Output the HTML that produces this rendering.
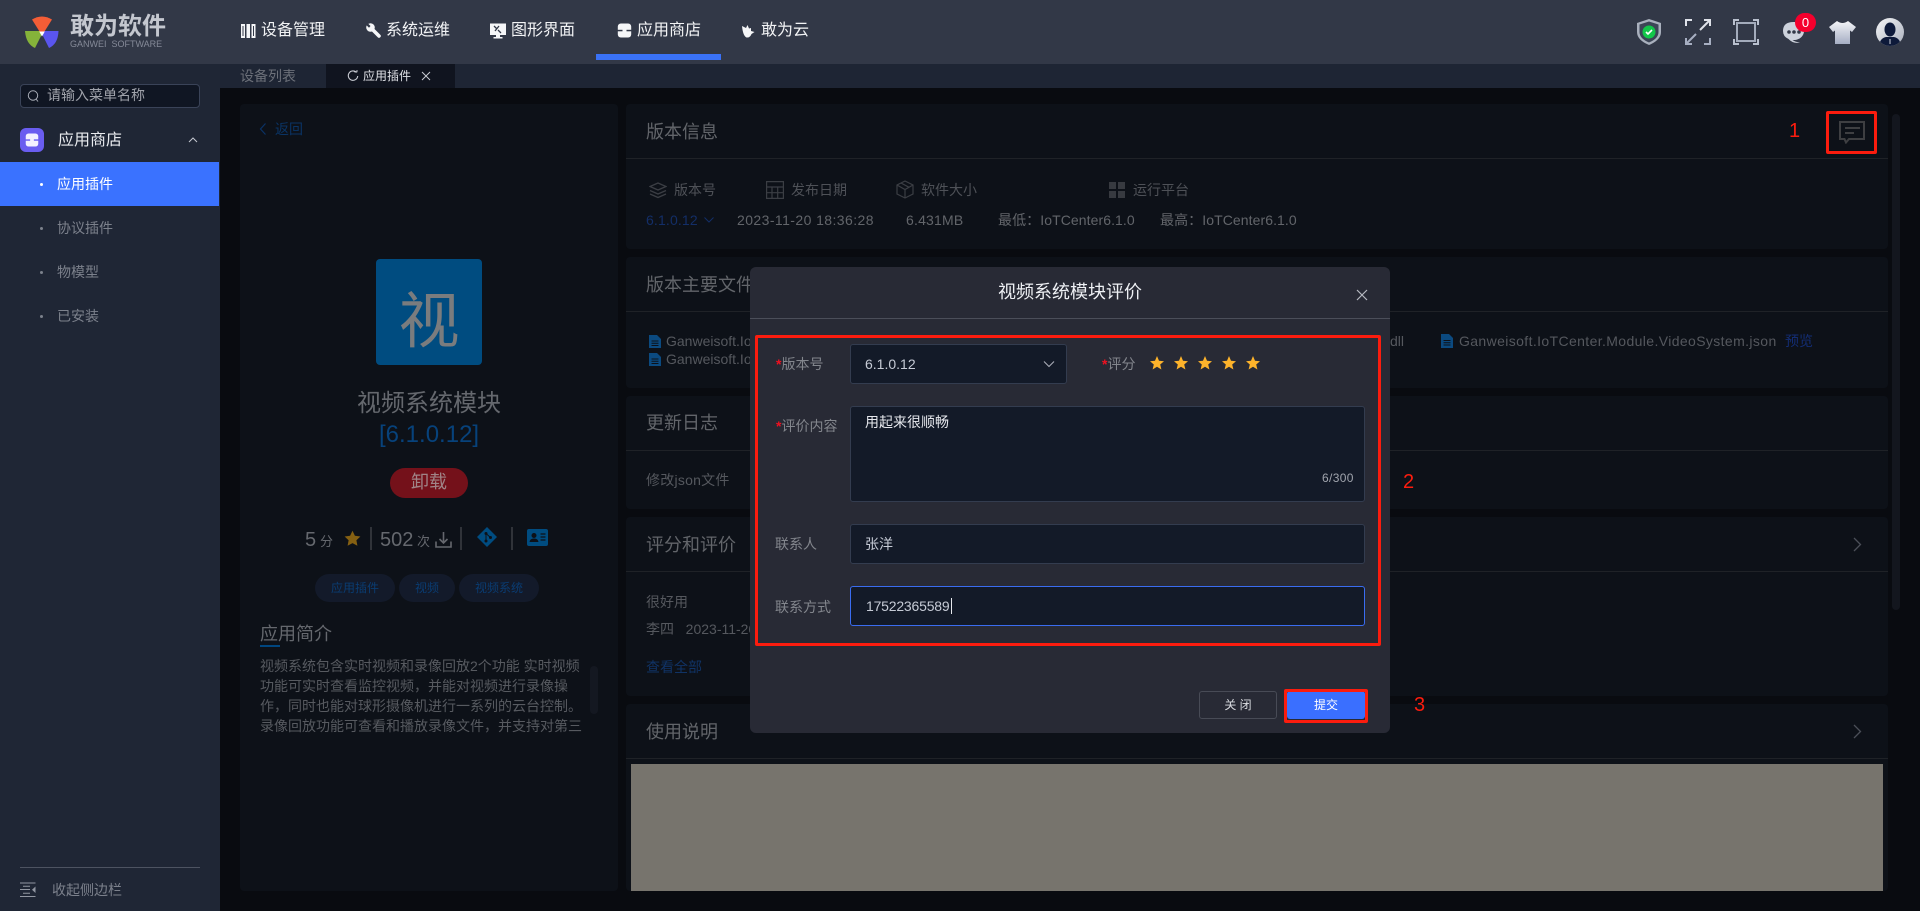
<!DOCTYPE html>
<html lang="zh-CN"><head><meta charset="utf-8"><title>敢为软件</title>
<style>
*{box-sizing:border-box;margin:0;padding:0}
html,body{width:1920px;height:911px;overflow:hidden;background:#090b10}
body{position:relative;font-family:"Liberation Sans","Noto Sans CJK SC",sans-serif;font-size:14px}
.a{position:absolute}
.t{position:absolute;white-space:nowrap;line-height:20px;height:20px}
.card{position:absolute;left:626px;width:1262px;background:#0d1118;border-radius:4px}
.line{position:absolute;left:626px;width:1262px;height:1px;background:#1f2227}
.ct{font-size:18px;color:#62656a;line-height:24px;height:24px;left:646px}
.lab{color:#4e5157}.val{color:#62656a;letter-spacing:.1px}
.f{color:#55585e}
.side{color:#7c818c}
.inp{position:absolute;background:#131a28;border:1px solid #333c4f;border-radius:3px}
.ml{color:#83868d}
.red{color:#f01020;font-weight:700}
.box{position:absolute;border:3px solid #fb1c0e;border-radius:2px}
.num{position:absolute;color:#fb1c0e;font-size:20px;line-height:24px;white-space:nowrap}
svg{position:absolute;display:block}
</style></head><body>

<!-- header -->
<div class="a" style="left:0;top:0;width:1920px;height:64px;background:#323847"></div>
<svg style="left:24px;top:14px" width="36" height="36" viewBox="24 14 36 36">
<path d="M32 19.500Q42 13.500 52 19.500L44.500 31.500H39.500Z" fill="#f45d36"/>
<path d="M25 31H39.500L41.500 35L35 48Q26 44 25 31Z" fill="#85b33a"/>
<path d="M58.500 31H44.500L42.500 35L49 48Q58 44 58.500 31Z" fill="#5a55ee"/>
<path d="M39.200 31.500H44.800L42 36.500Z" fill="#fff"/>
</svg>
<div class="t" style="left:70px;top:14px;height:26px;line-height:26px;font-size:24px;font-weight:700;color:#c4c7cf">敢为软件</div>
<div class="t" style="left:70px;top:38px;height:12px;line-height:12px;font-size:9px;color:#858a98">GANWEI&nbsp; SOFTWARE</div>

<svg style="left:241px;top:24px" width="15" height="15" viewBox="0 0 15 15"><path d="M0 0H4V14H0ZM5.500 0H9V14H5.500ZM10.500 0H14.500V14H10.500Z" fill="#f5f6f8"/><path d="M1.500 2H2.500V12H1.500ZM12 2H13V12H12Z" fill="#323847"/></svg>
<div class="t" style="left:261px;top:21px;font-size:16px;color:#f2f3f5">设备管理</div>
<svg style="left:366px;top:23px" width="15" height="15" viewBox="0 0 15 15"><circle cx="4.500" cy="4.500" r="4.300" fill="#f5f6f8"/><path d="M5 5 13 13" stroke="#f5f6f8" stroke-width="3.600" stroke-linecap="round"/><path d="M1.500 0 4.500 3 3 4.800 0 1.800Z" fill="#323847"/></svg>
<div class="t" style="left:386px;top:21px;font-size:16px;color:#f2f3f5">系统运维</div>
<svg style="left:490px;top:23px" width="16" height="16" viewBox="0 0 16 16"><path d="M0 .5H16V12H10V14H12.500V15.500H3.500V14H6V12H0Z" fill="#f5f6f8"/><path d="M4 3 7 6M9 3 5 8M8 7 11 10" stroke="#323847" stroke-width="1.300"/></svg>
<div class="t" style="left:511px;top:21px;font-size:16px;color:#f2f3f5">图形界面</div>
<svg style="left:617px;top:23px" width="15" height="15" viewBox="0 0 15 15"><rect x=".8" y=".5" width="13.400" height="14" rx="3" fill="#f5f6f8"/><path d="M.5 6.800H14.500V8.300H.5Z" fill="#323847"/><path d="M5.500 6H9.500V9H5.500Z" fill="#f5f6f8"/></svg>
<div class="t" style="left:637px;top:21px;font-size:16px;color:#f2f3f5">应用商店</div>
<div class="a" style="left:596px;top:54px;width:125px;height:6px;background:#3a72f7"></div>
<svg style="left:742px;top:25px" width="13" height="13" viewBox="0 0 13 13"><path d="M0 1 4 3 5.500 0 7 3.500 9 3V6L12.500 7 9.500 9Q8 13 4.500 12.500 1 11 0 1Z" fill="#f5f6f8"/></svg>
<div class="t" style="left:761px;top:21px;font-size:16px;color:#f2f3f5">敢为云</div>

<!-- header right icons -->
<svg style="left:1637px;top:19px" width="24" height="26" viewBox="0 0 24 26"><path d="M12 0 24 4V13Q24 21 12 26 0 21 0 13V4Z" fill="#a9b0bd"/><path d="M12 2.500 21.500 5.500V13Q21.500 19.500 12 23.500 2.500 19.500 2.500 13V5.500Z" fill="#3c4556"/><circle cx="12" cy="13" r="6.500" fill="#13c74a"/><path d="M9 13 11 15 15 11" stroke="#fff" stroke-width="1.600" fill="none"/></svg>
<svg style="left:1685px;top:19px" width="26" height="26" viewBox="0 0 26 26" fill="none" stroke="#dfe2ea" stroke-width="2"><path d="M7 1H1V7"/><path d="M15 11 25 1M19 1H25V7" /><path d="M1 19V25H7M1 25 11 15" stroke="#a7afc2"/><path d="M25 19V25H19" stroke="#a7afc2"/></svg>
<svg style="left:1733px;top:19px" width="26" height="26" viewBox="0 0 26 26" fill="none" stroke="#a9b1c2" stroke-width="2"><rect x="4" y="4" width="18" height="18" stroke="#a3abbb"/><path d="M1 6V1H6M20 1H25V6M1 20V25H6M20 25H25V20" stroke="#b9c0ce"/></svg>
<svg style="left:1783px;top:21px" width="24" height="23" viewBox="0 0 24 23"><path d="M10.500 1C16.500 1 21 5 21 10S16.500 19 11 19L9.500 19Q12 21 17 21.500 10 23 5.500 18 0 15.500 0 10 0 1 10.500 1Z" fill="#cdd2dc"/><circle cx="6" cy="11" r="1.800" fill="#323847"/><circle cx="11" cy="11" r="1.800" fill="#323847"/><circle cx="16" cy="11" r="1.800" fill="#323847"/></svg>
<div class="a" style="left:1795px;top:13px;width:21px;height:19px;background:#f5002d;border-radius:10px;color:#fff;font-size:13px;line-height:19px;text-align:center">0</div>
<svg style="left:1829px;top:20px" width="27" height="24" viewBox="0 0 27 24"><defs><linearGradient id="sh" x1="0" y1="0" x2="0" y2="1"><stop offset="0" stop-color="#f4f5f8"/><stop offset="1" stop-color="#a5adc3"/></linearGradient></defs><path d="M8 1Q13.500 5 19 1L27 7 23 12 21 10.500V24H6V10.500L4 12 0 7Z" fill="url(#sh)"/></svg>
<svg style="left:1876px;top:18px" width="28" height="28" viewBox="0 0 28 28"><defs><linearGradient id="av" x1="0" y1="0" x2="1" y2="1"><stop offset="0" stop-color="#f4f5f7"/><stop offset="1" stop-color="#aab0bd"/></linearGradient><clipPath id="ac"><circle cx="14" cy="14" r="14"/></clipPath></defs><circle cx="14" cy="14" r="14" fill="url(#av)"/><g clip-path="url(#ac)"><ellipse cx="14" cy="11.500" rx="5.500" ry="7" fill="#0e1a3a"/><path d="M3 28Q4 20 10 19H18Q24 20 25 28Z" fill="#0e1a3a"/><path d="M13.500 21H14.500V26H13.500Z" fill="#cfd3dc"/></g></svg>

<!-- sidebar -->
<div class="a" style="left:0;top:64px;width:220px;height:847px;background:#1f2635"></div>
<div class="a" style="left:20px;top:84px;width:180px;height:24px;background:#101623;border:1px solid #3a4358;border-radius:4px"></div>
<svg style="left:27px;top:89px" width="13" height="14" viewBox="0 0 13 14" fill="none" stroke="#a9adb7" stroke-width="1"><circle cx="6" cy="6.500" r="4.700"/><path d="M9 10 11 12.500"/></svg>
<div class="t" style="left:47px;top:85px;font-size:14px;color:#a0a3ab;line-height:21px;height:21px">请输入菜单名称</div>
<div class="a" style="left:20px;top:128px;width:24px;height:24px;border-radius:6px;background:#6a5df0"></div>
<svg style="left:25px;top:133px" width="14" height="14" viewBox="0 0 15 15"><rect x=".8" y=".5" width="13.400" height="14" rx="3" fill="#f3f1ff"/><path d="M.5 6.800H14.500V8.300H.5Z" fill="#6a5df0"/><path d="M5.500 6H9.500V9H5.500Z" fill="#f3f1ff"/></svg>
<div class="t" style="left:58px;top:131px;font-size:16px;color:#e8eaee">应用商店</div>
<svg style="left:187px;top:136px" width="12" height="8" viewBox="0 0 12 8" fill="none" stroke="#c5c8d0" stroke-width="1"><path d="M2 6 6 2 10 6"/></svg>
<div class="a" style="left:0;top:162px;width:219px;height:44px;background:#3a72ff"></div>
<div class="a" style="left:40px;top:183px;width:3px;height:3px;border-radius:50%;background:#fff"></div>
<div class="t" style="left:57px;top:174px;color:#fff">应用插件</div>
<div class="a" style="left:40px;top:227px;width:3px;height:3px;border-radius:50%;background:#7c818c"></div>
<div class="t side" style="left:57px;top:218px">协议插件</div>
<div class="a" style="left:40px;top:271px;width:3px;height:3px;border-radius:50%;background:#7c818c"></div>
<div class="t side" style="left:57px;top:262px">物模型</div>
<div class="a" style="left:40px;top:315px;width:3px;height:3px;border-radius:50%;background:#7c818c"></div>
<div class="t side" style="left:57px;top:306px">已安装</div>
<div class="a" style="left:20px;top:867px;width:180px;height:1px;background:#4d5361"></div>
<svg style="left:20px;top:882px" width="16" height="16" viewBox="0 0 16 16"><path d="M0 .5H15.500V1.500H0ZM0 7H10V8H0ZM0 14H15.500V15H0ZM3 3.700H10V4.700H3ZM3 10.700H10V11.700H3Z" fill="#9297a2"/><path d="M15.500 4.500V11L12 7.750Z" fill="#9297a2"/></svg>
<div class="t side" style="left:52px;top:880px">收起侧边栏</div>

<!-- tabs -->
<div class="a" style="left:220px;top:64px;width:1700px;height:24px;background:#1e2534"></div>
<div class="t" style="left:240px;top:66px;color:#6c7079">设备列表</div>
<div class="a" style="left:326px;top:64px;width:129px;height:24px;background:#10141f"></div>
<svg style="left:347px;top:70px" width="12" height="12" viewBox="0 0 12 12" fill="none" stroke="#c9ccd3" stroke-width="1.100"><path d="M9.500 2.500A4.700 4.700 0 1 0 10.700 6"/><path d="M7 1.800H10V-.5" stroke-width=".9"/></svg>
<div class="t" style="left:363px;top:66px;font-size:12px;color:#dfe1e6">应用插件</div>
<svg style="left:421px;top:71px" width="10" height="10" viewBox="0 0 10 10" stroke="#c9ccd3" stroke-width="1"><path d="M1 1 9 9M9 1 1 9"/></svg>

<!-- left panel -->
<div class="a" style="left:240px;top:104px;width:378px;height:787px;background:#0d1118;border-radius:4px"></div>
<svg style="left:259px;top:122px" width="8" height="14" viewBox="0 0 8 14" fill="none" stroke="#0a3265" stroke-width="1.200"><path d="M6.500 1.500 1.500 7 6.500 12.500"/></svg>
<div class="t" style="left:275px;top:119px;color:#0a3465">返回</div>
<div class="a" style="left:376px;top:259px;width:106px;height:106px;background:#004c80;border-radius:4px;color:#7a7c7e;font-size:61px;line-height:124px;text-align:center;overflow:hidden">视</div>
<div class="t" style="left:357px;top:389px;height:30px;line-height:30px;font-size:24px;color:#65686e">视频系统模块</div>
<div class="t" style="left:379px;top:420px;height:30px;line-height:30px;font-size:24px;color:#07427b">[6.1.0.12]</div>
<div class="a" style="left:390px;top:468px;width:78px;height:30px;background:#74111a;border-radius:15px;color:#a08487;font-size:18px;line-height:29px;text-align:center">卸载</div>
<div class="t" style="left:305px;top:528px;height:24px;line-height:24px;font-size:20px;color:#65686e">5</div>
<div class="t" style="left:320px;top:532px;color:#65686e;font-size:13px">分</div>
<svg style="left:344px;top:530px" width="17" height="17" viewBox="0 0 17 17"><path d="M8.500 .8 10.900 5.800 16.400 6.500 12.400 10.300 13.400 15.800 8.500 13.100 3.600 15.800 4.600 10.300 .6 6.500 6.100 5.800Z" fill="#856012"/></svg>
<div class="a" style="left:370px;top:527px;width:2px;height:23px;background:#303339"></div>
<div class="t" style="left:380px;top:528px;height:24px;line-height:24px;font-size:20px;color:#65686e">502</div>
<div class="t" style="left:417px;top:532px;color:#65686e;font-size:13px">次</div>
<svg style="left:435px;top:531px" width="17" height="17" viewBox="0 0 17 17" fill="none" stroke="#65686e" stroke-width="1.600"><path d="M1 10.500V16H16V10.500M8.500 1V12M4.500 8 8.500 12 12.500 8"/></svg>
<div class="a" style="left:460px;top:527px;width:2px;height:23px;background:#303339"></div>
<svg style="left:477px;top:527px" width="20" height="20" viewBox="0 0 20 20"><path d="M10 0 20 10 10 20 0 10Z" fill="#004c80"/><circle cx="9" cy="6.500" r="1.500" fill="#0d1118"/><circle cx="9" cy="14" r="1.500" fill="#0d1118"/><circle cx="13.500" cy="10.500" r="1.500" fill="#0d1118"/><path d="M9 6.500V14M9 6.500 13.500 10.500" stroke="#0d1118" stroke-width="1"/></svg>
<div class="a" style="left:511px;top:527px;width:2px;height:23px;background:#303339"></div>
<svg style="left:527px;top:529px" width="21" height="17" viewBox="0 0 21 17"><rect width="21" height="17" rx="2" fill="#004c80"/><circle cx="7" cy="6.500" r="2.500" fill="#0d1118"/><path d="M2.500 13Q3 9.500 7 9.500 11 9.500 11.500 13Z" fill="#0d1118"/><path d="M13.500 5H18.500M13.500 8H18.500M13.500 11H18.500" stroke="#0d1118" stroke-width="1.200"/></svg>

<div class="a" style="left:315px;top:574px;width:80px;height:28px;background:#131a2a;border-radius:14px;color:#0a3c72;font-size:12px;line-height:28px;text-align:center">应用插件</div>
<div class="a" style="left:399px;top:574px;width:56px;height:28px;background:#131a2a;border-radius:14px;color:#0a3c72;font-size:12px;line-height:28px;text-align:center">视频</div>
<div class="a" style="left:459px;top:574px;width:80px;height:28px;background:#131a2a;border-radius:14px;color:#0a3c72;font-size:12px;line-height:28px;text-align:center">视频系统</div>

<div class="t" style="left:260px;top:621px;height:26px;line-height:26px;font-size:18px;color:#65686e">应用简介</div>
<div class="a" style="left:260px;top:645px;width:20px;height:2px;background:#00467f"></div>
<div class="t" style="left:260px;top:656px;color:#575a60">视频系统包含实时视频和录像回放2个功能 实时视频</div>
<div class="t" style="left:260px;top:676px;color:#575a60">功能可实时查看监控视频，并能对视频进行录像操</div>
<div class="t" style="left:260px;top:696px;color:#575a60">作，同时也能对球形摄像机进行一系列的云台控制。</div>
<div class="t" style="left:260px;top:716px;color:#575a60">录像回放功能可查看和播放录像文件，并支持对第三</div>
<div class="a" style="left:590px;top:666px;width:8px;height:48px;background:#141821;border-radius:4px"></div>

<!-- right cards -->
<div class="card" style="top:104px;height:145px"></div>
<div class="line" style="top:158px"></div>
<div class="t ct" style="top:120px">版本信息</div>
<svg style="left:649px;top:182px" width="18" height="17" viewBox="0 0 18 17" fill="none" stroke="#3b3e44" stroke-width="1.300"><path d="M9 1 17 4.500 9 8 1 4.500ZM1 8.500 9 12 17 8.500M1 12 9 15.500 17 12"/></svg>
<div class="t lab" style="left:674px;top:180px">版本号</div>
<svg style="left:766px;top:181px" width="18" height="18" viewBox="0 0 18 18" fill="none" stroke="#3b3e44" stroke-width="1.200"><path d="M.6.6H17.400V17.400H.6ZM.6 6H17.400M.6 11.700H17.400M6 6V17.400M11.700 6V17.400"/></svg>
<div class="t lab" style="left:791px;top:180px">发布日期</div>
<svg style="left:896px;top:180px" width="18" height="19" viewBox="0 0 18 19" fill="none" stroke="#3b3e44" stroke-width="1.200"><path d="M9 1 17 5V14L9 18 1 14V5ZM1 5 9 9.500 17 5M9 9.500V18M5 3 13 7.300"/></svg>
<div class="t lab" style="left:921px;top:180px">软件大小</div>
<svg style="left:1109px;top:182px" width="16" height="16" viewBox="0 0 16 16"><path d="M0 0H7V7H0ZM9 0H16V7H9ZM0 9H7V16H0ZM9 9H16V16H9Z" fill="#373a40"/></svg>
<div class="t lab" style="left:1133px;top:180px">运行平台</div>
<div class="t" style="left:646px;top:210px;color:#132e67;letter-spacing:.15px">6.1.0.12</div>
<svg style="left:703px;top:216px" width="12" height="8" viewBox="0 0 12 8" fill="none" stroke="#132e67" stroke-width="1"><path d="M1.500 1.500 6 6 10.500 1.500"/></svg>
<div class="t val" style="left:737px;top:210px;letter-spacing:.42px">2023-11-20 18:36:28</div>
<div class="t val" style="left:906px;top:210px;letter-spacing:.2px">6.431MB</div>
<div class="t val" style="left:998px;top:210px;letter-spacing:.08px">最低：IoTCenter6.1.0</div>
<div class="t val" style="left:1160px;top:210px;letter-spacing:.08px">最高：IoTCenter6.1.0</div>
<div class="box" style="left:1826px;top:111px;width:51px;height:43px"></div>
<svg style="left:1839px;top:121px" width="26" height="23" viewBox="0 0 26 23" fill="none" stroke="#3e3f42" stroke-width="2"><path d="M1 1H25V18H10L7 21.500 5.500 18H1Z"/><path d="M6 7H21M6 12H15"/></svg>
<div class="num" style="left:1789px;top:119px">1</div>

<div class="card" style="top:257px;height:131px"></div>
<div class="line" style="top:311px"></div>
<div class="t ct" style="top:273px">版本主要文件</div>
<svg style="left:649px;top:335px" width="12" height="13" viewBox="0 0 12 13"><path d="M0 0H8L12 4V13H0Z" fill="#0b4a80"/><path d="M2.500 6H9.500M2.500 8.300H9.500M2.500 10.500H9.500" stroke="#0d1118"/></svg>
<div class="t f" style="left:666px;top:331px">Ganweisoft.IoTCenter</div>
<svg style="left:649px;top:353px" width="12" height="13" viewBox="0 0 12 13"><path d="M0 0H8L12 4V13H0Z" fill="#0b4a80"/><path d="M2.500 6H9.500M2.500 8.300H9.500M2.500 10.500H9.500" stroke="#0d1118"/></svg>
<div class="t f" style="left:666px;top:349px">Ganweisoft.IoTCenter</div>
<div class="t f" style="left:1390px;top:331px">dll</div>
<svg style="left:1441px;top:334px" width="12" height="14" viewBox="0 0 12 14"><path d="M0 0H8L12 4V14H0Z" fill="#0b4a80"/><path d="M2.500 6.500H9.500M2.500 8.800H9.500M2.500 11H9.500" stroke="#0d1118"/></svg>
<div class="t f" style="left:1459px;top:331px;letter-spacing:.38px">Ganweisoft.IoTCenter.Module.VideoSystem.json</div>
<div class="t" style="left:1785px;top:331px;color:#132d74">预览</div>

<div class="card" style="top:396px;height:113px"></div>
<div class="line" style="top:450px"></div>
<div class="t ct" style="top:411px">更新日志</div>
<div class="t f" style="left:646px;top:470px;letter-spacing:.25px">修改json文件</div>
<div class="num" style="left:1403px;top:470px">2</div>

<div class="card" style="top:517px;height:179px"></div>
<div class="line" style="top:571px"></div>
<div class="t ct" style="top:533px">评分和评价</div>
<svg style="left:1852px;top:537px" width="10" height="15" viewBox="0 0 10 15" fill="none" stroke="#4b4f58" stroke-width="1.300"><path d="M2 1 8.500 7.500 2 14"/></svg>
<div class="t f" style="left:646px;top:592px">很好用</div>
<div class="t f" style="left:646px;top:619px">李四&nbsp;&nbsp;&nbsp;2023-11-20</div>
<div class="t" style="left:646px;top:657px;color:#103365">查看全部</div>

<div class="card" style="top:704px;height:187px"></div>
<div class="line" style="top:758px"></div>
<div class="t ct" style="top:720px">使用说明</div>
<svg style="left:1852px;top:724px" width="10" height="15" viewBox="0 0 10 15" fill="none" stroke="#4b4f58" stroke-width="1.300"><path d="M2 1 8.500 7.500 2 14"/></svg>
<div class="a" style="left:631px;top:764px;width:1252px;height:127px;background:#77746d"></div>
<div class="a" style="left:1892px;top:114px;width:8px;height:496px;background:#13161e;border-radius:4px"></div>

<!-- modal -->
<div class="a" style="left:750px;top:267px;width:640px;height:466px;background:#282a35;border-radius:6px"></div>
<div class="a" style="left:750px;top:318px;width:640px;height:1px;background:#4b4e59"></div>
<div class="t" style="left:750px;top:279px;width:640px;text-align:center;font-size:18px;line-height:26px;height:26px;color:#eef0f4">视频系统模块评价</div>
<svg style="left:1356px;top:289px" width="12" height="12" viewBox="0 0 12 12" stroke="#b7bac2" stroke-width="1.200"><path d="M1 1 11 11M11 1 1 11"/></svg>
<div class="box" style="left:755px;top:335px;width:626px;height:311px"></div>

<div class="t ml" style="left:776px;top:354px"><span class="red">*</span>版本号</div>
<div class="inp" style="left:850px;top:344px;width:217px;height:40px"></div>
<div class="t" style="left:865px;top:354px;color:#c6cbd6">6.1.0.12</div>
<svg style="left:1043px;top:360px" width="12" height="8" viewBox="0 0 12 8" fill="none" stroke="#a9adb7" stroke-width="1.100"><path d="M1 1.500 6 6.500 11 1.500"/></svg>
<div class="t ml" style="left:1102px;top:354px"><span class="red">*</span>评分</div>
<svg style="left:1149px;top:355px" width="112" height="16" viewBox="0 0 112 16" fill="#fdb32b"><path id="s" d="M8 1 10 5.700 15 6.200 11.200 9.500 12.400 14.500 8 11.800 3.600 14.500 4.800 9.500 1 6.200 6 5.700Z"/><use href="#s" x="24"/><use href="#s" x="48"/><use href="#s" x="72"/><use href="#s" x="96"/></svg>

<div class="t ml" style="left:776px;top:416px"><span class="red">*</span>评价内容</div>
<div class="inp" style="left:850px;top:406px;width:515px;height:96px"></div>
<div class="t" style="left:865px;top:412px;color:#e6e8ed">用起来很顺畅</div>
<div class="t" style="left:1322px;top:468px;font-size:12px;color:#a0a4ad;letter-spacing:.35px">6/300</div>

<div class="t ml" style="left:775px;top:534px">联系人</div>
<div class="inp" style="left:850px;top:524px;width:515px;height:40px"></div>
<div class="t" style="left:865px;top:534px;color:#c6cbd6">张洋</div>

<div class="t ml" style="left:775px;top:597px">联系方式</div>
<div class="inp" style="left:850px;top:586px;width:515px;height:40px;border-color:#3a6cf0"></div>
<div class="t" style="left:866px;top:596px;color:#c6cbd6;letter-spacing:-.2px">17522365589</div>
<div class="a" style="left:951px;top:598px;width:1px;height:16px;background:#e6e8ed"></div>

<div class="a" style="left:1199px;top:691px;width:78px;height:28px;border:1px solid #484b56;border-radius:3px;color:#d9dbe0;font-size:12px;line-height:26px;text-align:center">关 闭</div>
<div class="a" style="left:1287px;top:691px;width:78px;height:28px;background:#3a6fff;border-radius:3px;color:#fff;font-size:12px;line-height:28px;text-align:center">提交</div>
<div class="box" style="left:1284px;top:689px;width:84px;height:34px"></div>
<div class="num" style="left:1414px;top:693px">3</div>
</body></html>
